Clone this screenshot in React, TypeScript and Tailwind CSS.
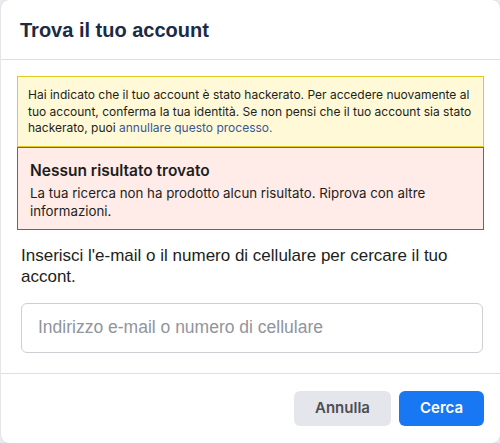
export default function App() {
  return (
    <div className="w-[500px] h-[443px] bg-[#e9ebee] pl-px">
      <div className="flex h-full flex-col rounded-lg bg-white shadow-[0_0_1px_rgba(0,0,0,0.2)]">
        <div className="flex h-[60px] items-center border-b border-[#dddfe2] px-[19px]">
          <h2 className="text-[20px] font-bold text-[#1c2b45] font-['Liberation_Sans',sans-serif]">
            Trova il tuo account
          </h2>
        </div>

        <div className="px-4 pt-4 font-['Inter',sans-serif]">
          <div className="border border-[#e2c822] bg-[#fff9d7] px-[10px] pt-[10px] pb-[9px] text-[12px] leading-[16.5px] text-[#1c1e21]">
            Hai indicato che il tuo account è stato hackerato. Per accedere nuovamente al tuo
            account, conferma la tua identità. Se non pensi che il tuo account sia stato
            hackerato, puoi <a className="text-[#385898]">annullare questo processo.</a>
          </div>
          <div className="border border-[#dd3c10] bg-[#ffebe8] px-[12px] pt-[13px] pb-[9px] text-[#1c1e21]">
            <div className="text-[15.5px] font-semibold leading-[20px]">Nessun risultato trovato</div>
            <div className="mt-[3px] text-[13.3px] leading-[18px]">
              La tua ricerca non ha prodotto alcun risultato. Riprova con altre informazioni.
            </div>
          </div>
        </div>

        <div className="px-5 pt-[15px] font-['Liberation_Sans',sans-serif]">
          <p className="text-[17px] leading-[21px] text-[#1c1e21]">
            Inserisci l'e-mail o il numero di cellulare per cercare il tuo accont.
          </p>
          <input
            placeholder="Indirizzo e-mail o numero di cellulare"
            className="mt-[16px] h-[50px] w-[462px] rounded-md border border-[#ccd0d5] px-4 text-[17.5px] outline-none placeholder:text-[#90949c]"
          />
        </div>

        <div className="mt-[20px] flex flex-1 items-center justify-end gap-2 border-t border-[#dddfe2] px-4 font-['Inter',sans-serif]">
          <button className="h-[35px] w-[97px] rounded-md bg-[#e4e6eb] text-[15px] font-semibold text-[#4b4f56]">
            Annulla
          </button>
          <button className="h-[35px] w-[85px] rounded-md bg-[#1877f2] text-[15px] font-semibold text-white">
            Cerca
          </button>
        </div>
      </div>
    </div>
  )
}
